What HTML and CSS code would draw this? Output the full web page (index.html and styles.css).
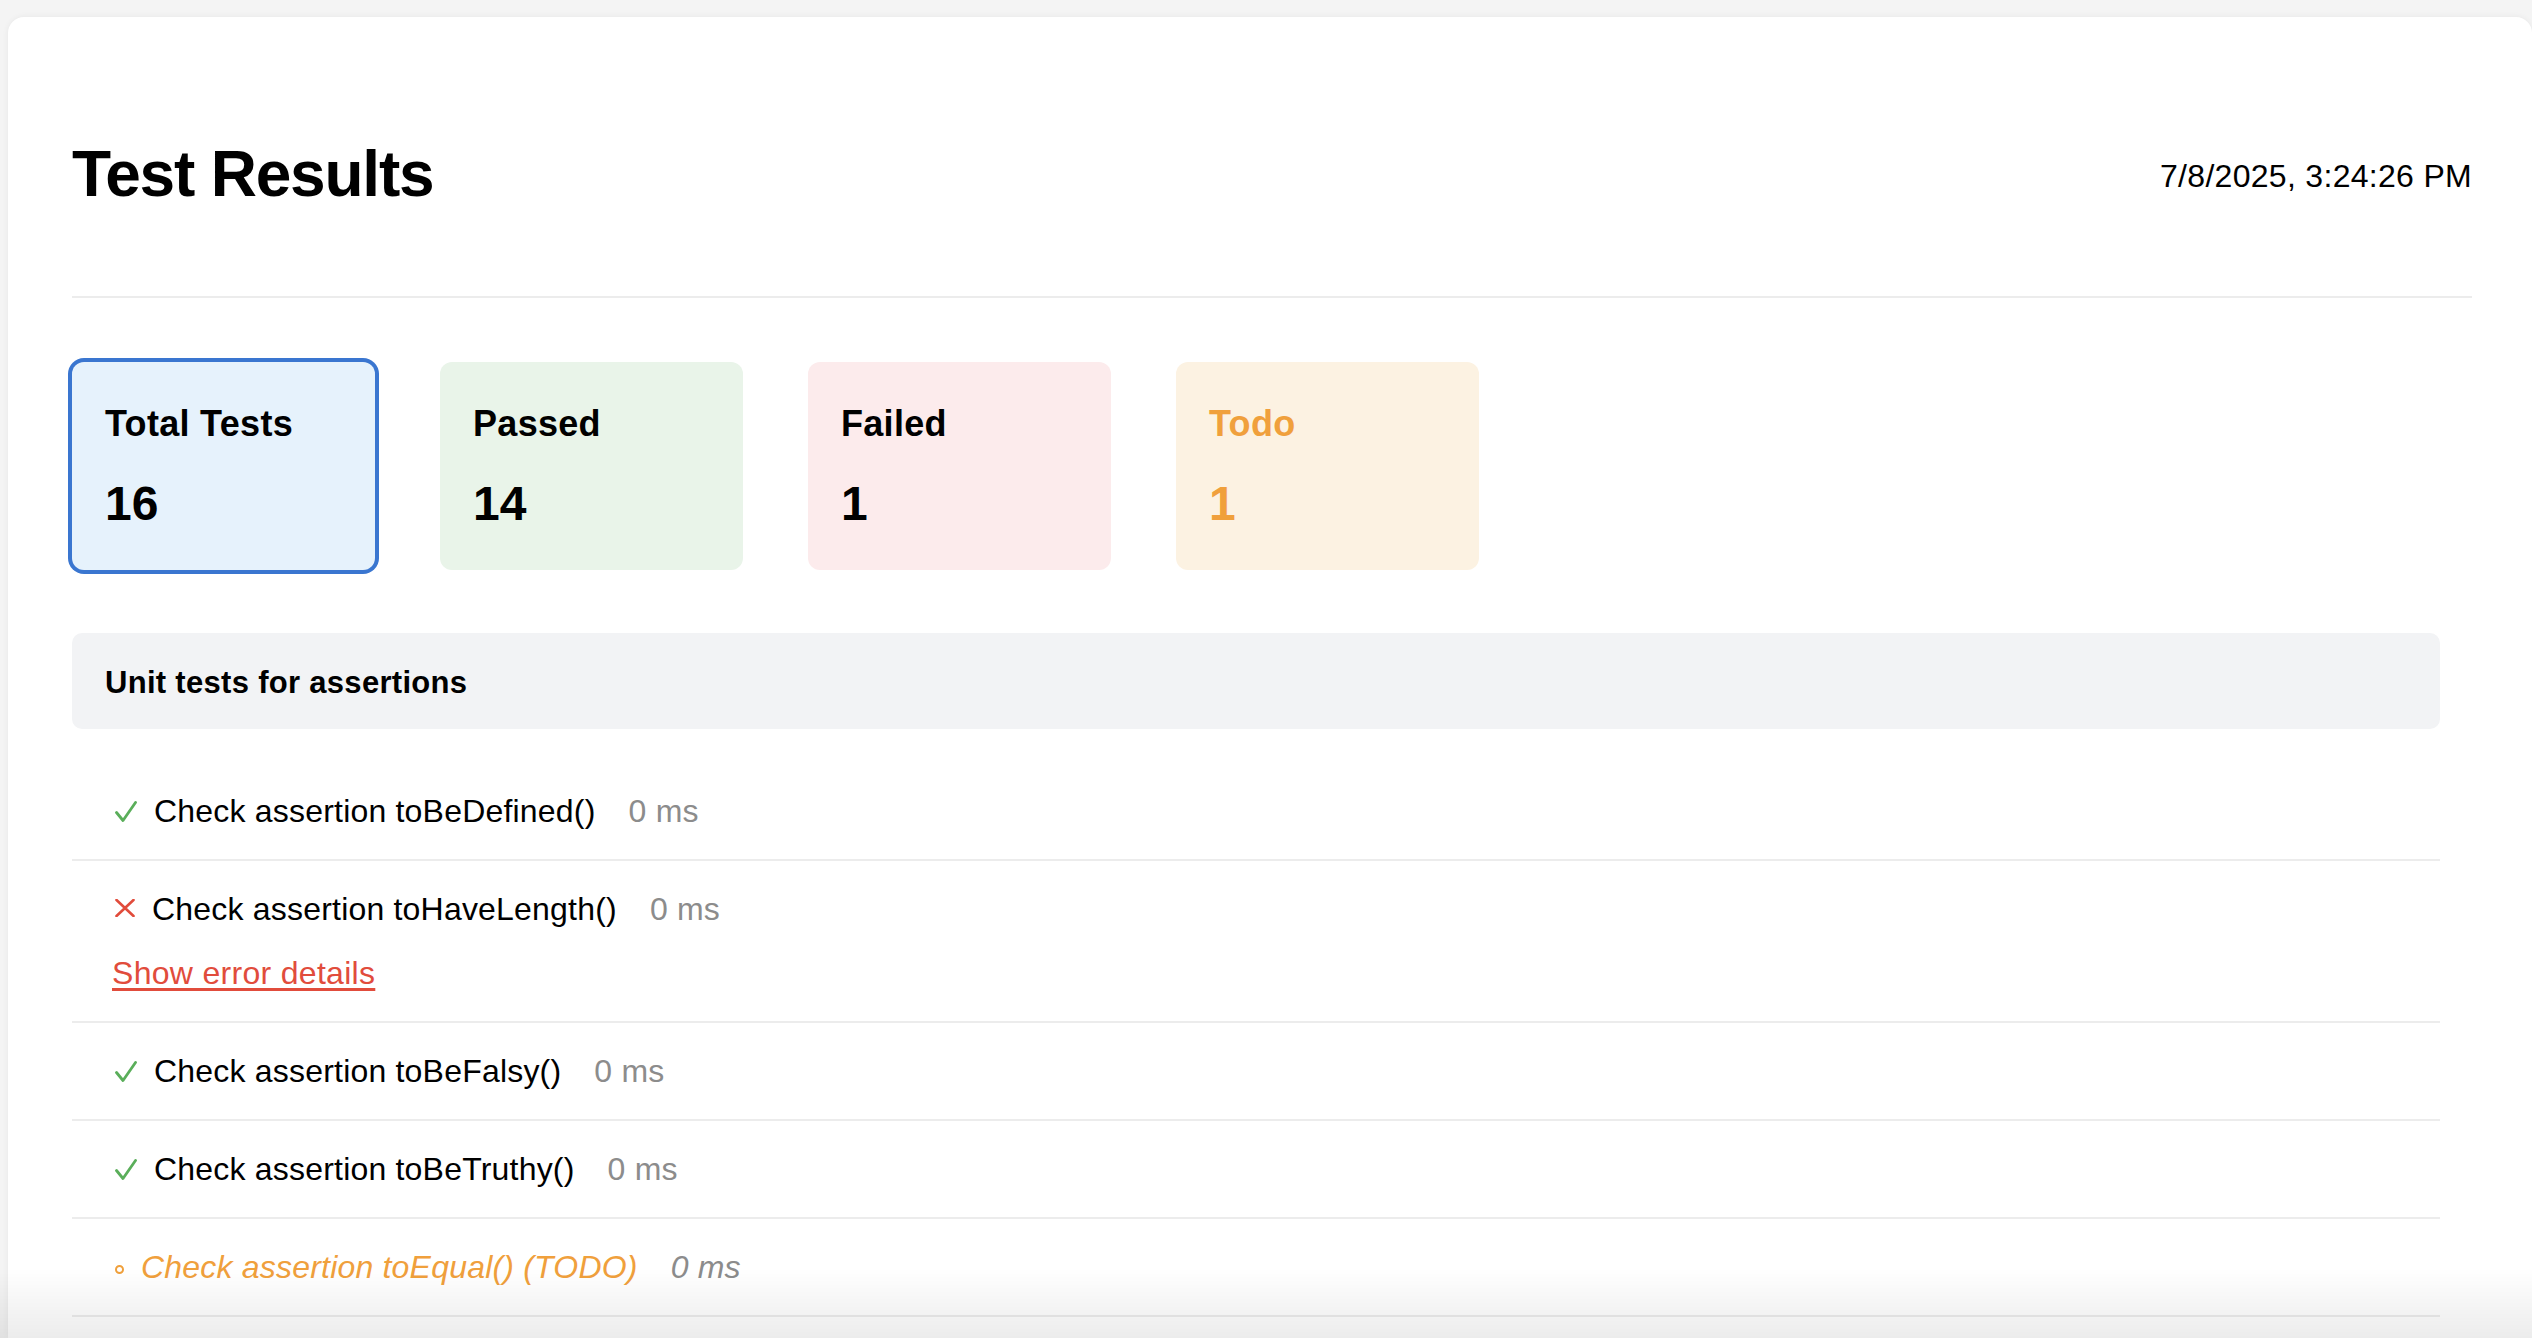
FILE: index.html
```html
<!DOCTYPE html>
<html lang="en">
<head>
<meta charset="utf-8">
<title>Test Results</title>
<link rel="stylesheet" href="styles.css">
</head>
<body>
<main class="report">
  <header class="report-header">
    <h1 class="report-title">Test Results</h1>
    <div class="report-date">7/8/2025, 3:24:26 PM</div>
  </header>

  <section class="summary">
    <div class="stat stat-total is-active">
      <div class="stat-label">Total Tests</div>
      <div class="stat-value">16</div>
    </div>
    <div class="stat stat-passed">
      <div class="stat-label">Passed</div>
      <div class="stat-value">14</div>
    </div>
    <div class="stat stat-failed">
      <div class="stat-label">Failed</div>
      <div class="stat-value">1</div>
    </div>
    <div class="stat stat-todo">
      <div class="stat-label">Todo</div>
      <div class="stat-value">1</div>
    </div>
  </section>

  <section class="suite">
    <div class="suite-header">Unit tests for assertions</div>
    <ul class="tests">
      <li class="test">
        <div class="test-line">
          <svg class="icon icon-pass" width="22" height="21" viewBox="0 0 22 21"><path d="M1.5 11.5 L8 19.5 L20.5 1.5" fill="none" stroke="#5aae5a" stroke-width="2.8" stroke-linecap="round" stroke-linejoin="round"/></svg><span class="test-name">Check assertion toBeDefined()</span><span class="test-time">0 ms</span>
        </div>
      </li>
      <li class="test">
        <div class="test-line">
          <svg class="icon icon-fail" width="20" height="18" viewBox="0 0 20 18"><path d="M1.5 1 L18.5 17 M18.5 1 L1.5 17" fill="none" stroke="#e14b3b" stroke-width="2.6" stroke-linecap="round"/></svg><span class="test-name">Check assertion toHaveLength()</span><span class="test-time">0 ms</span>
        </div>
        <a class="error-link" href="#">Show error details</a>
      </li>
      <li class="test">
        <div class="test-line">
          <svg class="icon icon-pass" width="22" height="21" viewBox="0 0 22 21"><path d="M1.5 11.5 L8 19.5 L20.5 1.5" fill="none" stroke="#5aae5a" stroke-width="2.8" stroke-linecap="round" stroke-linejoin="round"/></svg><span class="test-name">Check assertion toBeFalsy()</span><span class="test-time">0 ms</span>
        </div>
      </li>
      <li class="test">
        <div class="test-line">
          <svg class="icon icon-pass" width="22" height="21" viewBox="0 0 22 21"><path d="M1.5 11.5 L8 19.5 L20.5 1.5" fill="none" stroke="#5aae5a" stroke-width="2.8" stroke-linecap="round" stroke-linejoin="round"/></svg><span class="test-name">Check assertion toBeTruthy()</span><span class="test-time">0 ms</span>
        </div>
      </li>
      <li class="test test-todo">
        <div class="test-line">
          <svg class="icon icon-todo" width="9" height="9" viewBox="0 0 9 9"><circle cx="4.5" cy="4.5" r="3.5" fill="none" stroke="#f0a03c" stroke-width="2"/></svg><span class="test-name">Check assertion toEqual() (TODO)</span><span class="test-time">0 ms</span>
        </div>
      </li>
    </ul>
  </section>
</main>
<div class="bottom-fade"></div>
</body>
</html>
```

FILE: styles.css
```css
* {
  box-sizing: border-box;
}

html, body {
  height: 100%;
}

body {
  margin: 0;
  padding: 17px 0 0 8px;
  background: #f4f4f4;
  font-family: "Liberation Sans", Arial, Helvetica, sans-serif;
  color: #000;
  overflow: hidden;
}

.report {
  background: #ffffff;
  border-radius: 16px 16px 0 0;
  box-shadow: 0 0 6px rgba(0, 0, 0, 0.06);
  padding: 119px 60px 0 64px;
  height: 1321px;
  overflow: hidden;
}

.report-header {
  display: flex;
  justify-content: space-between;
  align-items: center;
  padding-bottom: 83px;
  border-bottom: 2px solid #ececec;
}

.report-title {
  margin: 0;
  font-size: 64px;
  line-height: 77px;
  font-weight: 700;
  letter-spacing: -1.2px;
}

.report-date {
  font-size: 32px;
  line-height: 40px;
  letter-spacing: 0.3px;
  padding-top: 2px;
}

.summary {
  display: flex;
  gap: 65px;
  margin-top: 64px;
}

.stat {
  width: 303px;
  height: 208px;
  border-radius: 12px;
  padding: 40px 34px 0 33px;
}

.stat-label {
  font-size: 36px;
  line-height: 43px;
  font-weight: 700;
  letter-spacing: 0.3px;
}

.stat-value {
  margin-top: 30px;
  font-size: 48px;
  line-height: 58px;
  font-weight: 700;
}

.stat-total {
  background: #e6f2fc;
}

.stat-total.is-active {
  box-shadow: 0 0 0 4px #3a76d0;
}

.stat-passed {
  background: #e9f4e9;
}

.stat-failed {
  background: #fcebec;
}

.stat-todo {
  background: #fcf2e2;
  color: #f0a03c;
}

.suite {
  margin-top: 63px;
  margin-right: 32px;
}

.suite-header {
  background: #f2f3f5;
  border-radius: 10px;
  height: 96px;
  padding: 0 33px;
  font-size: 31px;
  line-height: 99px;
  font-weight: 700;
  letter-spacing: 0.3px;
}

.tests {
  list-style: none;
  margin: 34px 0 0 0;
  padding: 0;
}

.test {
  padding: 24px 40px;
  border-bottom: 2px solid #ececec;
  font-size: 32px;
  line-height: 48px;
}

.test-line {
  white-space: nowrap;
}

.test-name {
  letter-spacing: 0.2px;
}

.icon {
  display: inline-block;
  margin-left: 3px;
  margin-right: 17px;
}

.icon-pass {
  vertical-align: 0;
}

.icon-fail {
  vertical-align: 3px;
}

.icon-todo {
  vertical-align: 4px;
}

.test-time {
  margin-left: 33px;
  color: #8c8c8c;
  letter-spacing: 0.2px;
}

.error-link {
  display: block;
  margin-top: 16px;
  color: #e14c3c;
  text-decoration: underline;
  text-decoration-thickness: 3px;
  text-underline-offset: 4px;
  letter-spacing: 0.3px;
  width: max-content;
}

.test-todo .test-line {
  font-style: italic;
}

.test-todo .test-name {
  color: #f0a03c;
}

.bottom-fade {
  position: fixed;
  left: 0;
  right: 0;
  bottom: 0;
  height: 70px;
  background: linear-gradient(rgba(0, 0, 0, 0), rgba(0, 0, 0, 0.075));
  pointer-events: none;
}
```
